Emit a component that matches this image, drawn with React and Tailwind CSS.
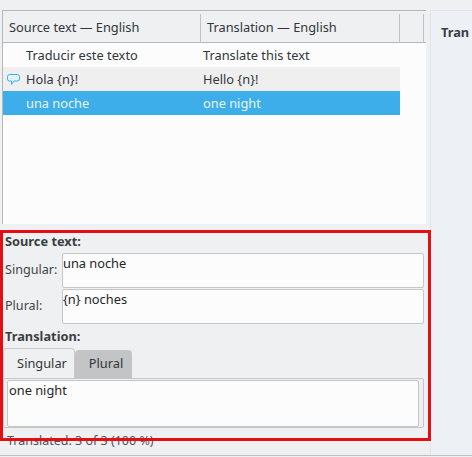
import React from "react";

function Bubble() {
  return (
    <svg width="13" height="13" viewBox="0 0 13 13" className="block">
      <path d="M2.5 1.5h8a2 2 0 0 1 2 2v2.5a2 2 0 0 1-2 2H7L4.5 11.5V8H2.5a2 2 0 0 1-2-2V3.5a2 2 0 0 1 2-2z" fill="#e3f1fb" stroke="#3daee9" strokeWidth="1" />
    </svg>
  );
}

function Row({ a, b, icon, cls }) {
  return (
    <div className={"flex h-6 w-[397px] items-center pt-[2px] " + cls}>
      <div className="flex w-[23px] shrink-0 justify-center pb-[2px] pr-[3px]">{icon}</div>
      <div className="w-[177px] shrink-0">{a}</div>
      <div>{b}</div>
    </div>
  );
}

function Field({ label, text }) {
  return (
    <div className="flex h-[36px] items-center">
      <div className="w-[60px] shrink-0 pl-[3px] text-[12.6px] text-[#3f4549]">{label}</div>
      <div className="h-[35px] w-[362px] rounded-[2px] border border-[#c4c6c8] bg-[#fcfcfc] leading-[18px] text-[#232629]">{text}</div>
    </div>
  );
}

export default function App() {
  return (
    <div className="relative h-[457px] w-[472px] overflow-hidden bg-[#eff0f1] font-['Noto_Sans',sans-serif] text-[12.8px] text-[#31363b]">
      <div className="flex h-[456px] border-b border-[#bcbec0] pt-[10px]">
        <div className="w-[430px] shrink-0 pl-[2px]">
          <div className="h-[214px] w-[424px] border-l border-t border-[#b4b6b8] bg-[#fcfcfc]">
            <div className="flex h-[32px] items-center border-b border-[#b4b6b8] bg-[#eff0f1] pt-[3px]">
              <div className="flex h-[29px] w-[197px] items-center pl-[6px]">Source text — English</div>
              <div className="flex h-[29px] w-[199px] items-center border-l border-[#c0c2c4] pl-[6px]">Translation — English</div>
              <div className="h-[29px] w-[25px] border-x border-[#c0c2c4]" />
            </div>
            <Row a="Traducir este texto" b="Translate this text" cls="" />
            <Row a="Hola {n}!" b="Hello {n}!" icon={<Bubble />} cls="bg-[#f0eff0]" />
            <Row a="una noche" b="one night" cls="bg-[#3daee9] text-[#e8f5fc]" />
          </div>
          <div className="mt-[8px] h-[21px] w-[424px] pl-[3px] font-bold leading-[19px] text-[#3a3f44]">Source text:</div>
          <div className="mt-[-1px] flex flex-col">
            <Field label="Singular:" text="una noche" />
            <Field label="Plural:" text="{n} noches" />
          </div>
          <div className="mt-[3px] h-[20px] pl-[3px] font-bold leading-[19px] text-[#3a3f44]">Translation:</div>
          <div className="mt-[2px] flex h-[29px] items-end pl-[1px]">
            <div className="flex h-[30px] w-[72px] items-center justify-center rounded-t-[4px] border border-b-0 border-[#c8cacc] bg-[#eff0f1] pl-[6px] pt-[1px]">Singular</div>
            <div className="flex h-[28px] w-[57px] items-center justify-center rounded-t-[4px] bg-[#c2c4c6] pl-[5px]">Plural</div>
          </div>
          <div className="ml-[1px] h-[50px] w-[421px] rounded-[2px] border border-[#c4c6c8] px-[3px] pt-[1px]">
            <div className="h-[47px] w-[412px] rounded-[2px] border border-[#c4c6c8] bg-[#fcfcfc] pl-[1px] leading-[18px] text-[#232629]">one night</div>
          </div>
          <div className="mt-[4px] pl-[5px] text-[12.5px] leading-[17px] text-[#4d5257]">Translated: 3 of 3 (100 %)</div>
        </div>
        <div className="flex-1 overflow-hidden border-l border-t border-[#e2e4e6] bg-[#edf0f4] pl-[10px] pt-[12px] font-bold leading-[18px] text-[#3a3f44]">Tran</div>
      </div>
      <div className="absolute left-0 top-[230px] h-[211px] w-[431px] border-[3px] border-[#e30f13]" />
    </div>
  );
}
